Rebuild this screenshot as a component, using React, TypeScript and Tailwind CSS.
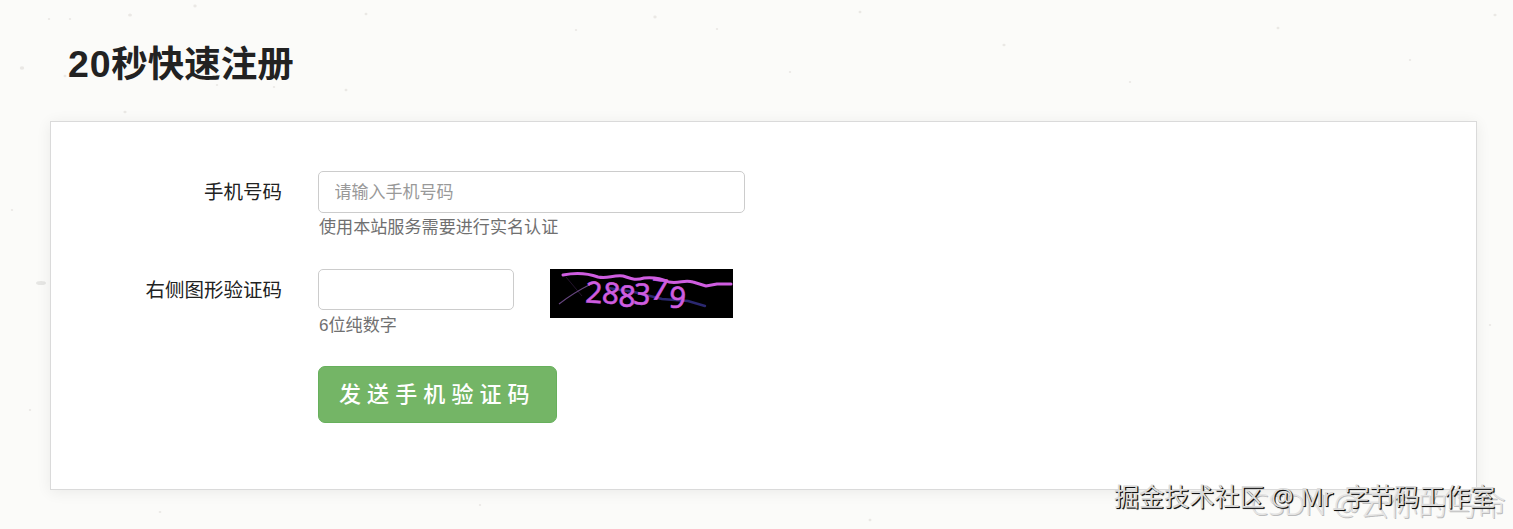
const specks: [number, number, number][] = [
  [49, 19, 1], [70, 19, 1], [130, 15, 1.6], [195, 6, 1.4], [366, 14, 1.2], [22, 68, 1.8], [65, 76, 1.2],
  [274, 87, 1], [217, 85, 0.9], [125, 112, 1.3], [346, 90, 1.2], [576, 30, 1], [655, 17, 1.4], [717, 29, 1],
  [790, 72, 1], [860, 12, 1.2], [1004, 45, 1.3], [1130, 82, 1], [1278, 28, 1.2], [1410, 60, 1], [1495, 15, 1.3],
  [12, 210, 1], [30, 410, 1], [1490, 325, 1], [160, 512, 1.1], [480, 505, 1], [870, 520, 1.2],
];

const digits: [string, number, number, number][] = [
  ["2", 35, 33.5, 3], ["8", 51, 33, 10], ["8", 68, 37, 4], ["3", 83, 35, 4], ["7", 100, 30, 6], ["9", 118, 38, 6],
];

function Paper() {
  return (
    <svg className="absolute inset-0 h-full w-full" aria-hidden="true">
      {specks.map(([x, y, r]) => (
        <ellipse key={`${x}-${y}`} cx={x} cy={y} rx={r * 1.2} ry={r} fill="#dcd8d5" opacity="0.55" />
      ))}
      <ellipse cx="41" cy="283" rx="5" ry="2" fill="#d9d8d5" opacity="0.6" />
    </svg>
  );
}

function Captcha() {
  return (
    <svg width="183" height="49" viewBox="0 0 183 49" className="shrink-0 overflow-visible bg-black" fill="none">
      <path d="M16 8 L32 27" stroke="#24142d" strokeWidth="1" />
      <path d="M9 35 C18 28 25 23 41 15" stroke="#66457f" strokeWidth="1.2" />
      <path d="M58 19 L84 23 L112 30 L138 32 L155 37" stroke="#2b2870" strokeWidth="2.4" strokeLinecap="round" />
      {digits.map(([d, x, y, a], i) => (
        <text
          key={i}
          transform={`translate(${x} ${y}) rotate(${a})`}
          fill="#cf5de0"
          stroke="#cf5de0"
          strokeWidth="0.6"
          fontSize="29.5"
          className="font-['Noto_Sans','Open_Sans',sans-serif]"
        >
          {d}
        </text>
      ))}
      <path
        d="M13 6 C23 4 37 4 48 8 C58 10 62 6 73 7 C80 9 84 12 94 9 C103 8 110 9 119 13 C130 15 134 10 143 13 L156 17 L167 15 L181 15"
        stroke="#cf5de0"
        strokeWidth="3"
        strokeLinecap="round"
        strokeLinejoin="round"
      />
    </svg>
  );
}

export default function App() {
  return (
    <main className="relative h-[529px] w-full overflow-hidden bg-[#fbfbf9] px-[50px] pt-[36px] font-['Liberation_Sans','Noto_Sans_CJK_SC',sans-serif] text-[#222]">
      <Paper />
      <h1 className="relative h-[85px] pt-px pl-[18px] text-[36.5px] leading-[54px] font-bold">
        <span className="text-[37.5px] tracking-[0.8px]">20</span>秒快速注册
      </h1>
      <form className="relative h-[369px] w-[1427px] border border-[#dadada] bg-white pt-[49px] shadow-[0_2px_14px_rgba(0,0,0,0.07)]">
        <div className="flex h-[98px]">
          <label className="w-[231px] pt-px text-right text-[19.5px] leading-[41px]">手机号码</label>
          <div className="ml-[36px]">
            <input
              placeholder="请输入手机号码"
              className="block h-[42px] w-[427px] rounded-[5px] border-[1.5px] border-[#ccc] bg-white px-[15.5px] pt-[2px] text-[17px] placeholder:text-[#999]"
            />
            <p className="pl-px text-[17.1px] leading-[30px] text-[#707070]">使用本站服务需要进行实名认证</p>
          </div>
        </div>
        <div className="flex h-[97px]">
          <label className="w-[231px] pt-px text-right text-[19.5px] leading-[41px]">右侧图形验证码</label>
          <div className="ml-[36px] w-[196px]">
            <input
              aria-label="右侧图形验证码"
              className="block h-[41px] w-full rounded-[5px] border-[1.5px] border-[#ccc] bg-white px-[15px] text-[17px]"
            />
            <p className="pt-px pl-px text-[17.1px] leading-[30px] text-[#707070]">6位纯数字</p>
          </div>
          <div className="ml-[36px] flex">
            <Captcha />
          </div>
        </div>
        <button
          type="button"
          className="ml-[267px] block h-[57px] w-[239px] rounded-[7px] border border-[#67b05c] bg-[#74b566] pl-[20px] text-left text-[22px] leading-[55px] font-medium tracking-[6.1px] whitespace-nowrap text-white"
        >
          发送手机验证码
        </button>
      </form>
      <div className="absolute top-[486px] left-[1250px] font-['Noto_Sans','Noto_Sans_CJK_SC',sans-serif] text-[29.2px] leading-[36px] font-light whitespace-nowrap text-[#e4e4e4] [text-shadow:1px_1px_0_#bcbcbc]">
        CSDN @云你的鸟命
      </div>
      <div className="absolute top-[478px] left-[1114px] font-['Noto_Sans','Noto_Sans_CJK_SC',sans-serif] text-[25.1px] leading-[36px] whitespace-nowrap text-[#dcdcdc] [text-shadow:1px_1px_0_#111,1px_1px_1px_#444]">
        掘金技术社区 @ Mr_字节码工作室
      </div>
    </main>
  );
}
